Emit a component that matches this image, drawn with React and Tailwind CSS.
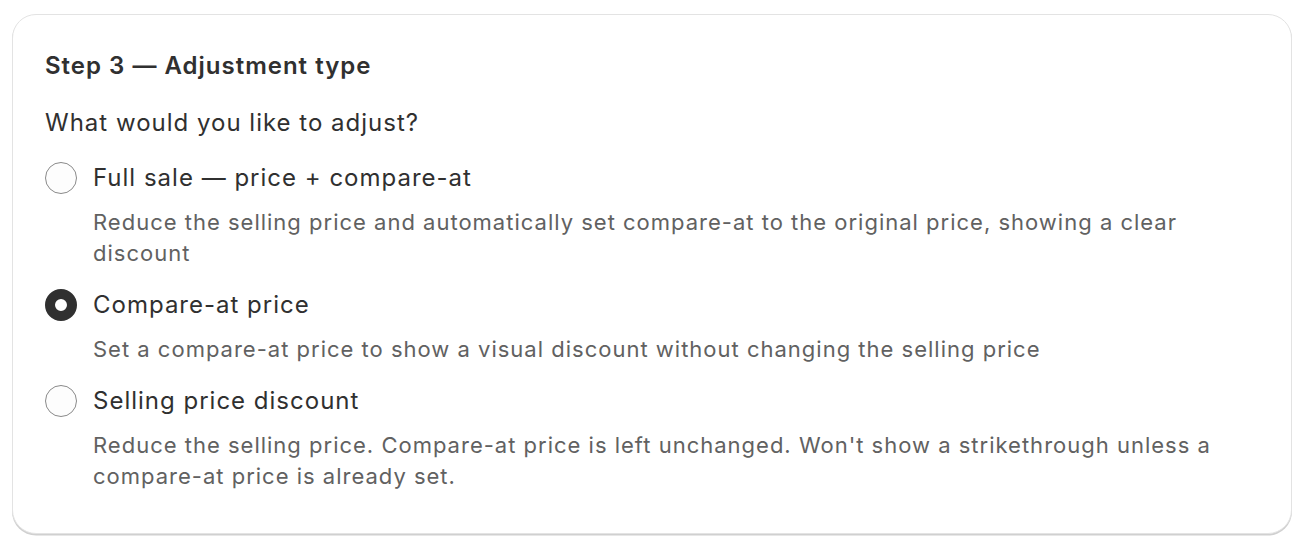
import React from 'react'

const options = [
  {
    label: 'Full sale — price + compare-at',
    help: 'Reduce the selling price and automatically set compare-at to the original price, showing a clear discount',
    checked: false,
  },
  {
    label: 'Compare-at price',
    help: 'Set a compare-at price to show a visual discount without changing the selling price',
    checked: true,
  },
  {
    label: 'Selling price discount',
    help: "Reduce the selling price. Compare-at price is left unchanged. Won't show a strikethrough unless a compare-at price is already set.",
    checked: false,
  },
]

function Radio({ checked }) {
  if (checked) {
    return <span className="w-8 h-8 shrink-0 rounded-full border-[10px] border-[#303030] bg-white" />
  }
  return <span className="w-8 h-8 shrink-0 rounded-full border border-[#8a8a8a] bg-[#fdfdfd]" />
}

function Option({ label, help, checked }) {
  return (
    <div>
      <label className="flex items-center gap-[16px] h-8">
        <Radio checked={checked} />
        <span className="text-[24px] leading-8 tracking-[1px] text-[#303030]">{label}</span>
      </label>
      <p className="mt-[13px] pl-[48px] text-[22px] leading-[31px] tracking-[1px] text-[#616161]">{help}</p>
    </div>
  )
}

export default function App() {
  return (
    <div className="bg-white min-h-[550px] pt-[14px] px-[12px] font-['Inter','Noto_Sans',sans-serif]">
      <div className="h-[520px] rounded-[24px] border border-[#e3e3e3] shadow-[0_1.5px_0_#d0d0d0] bg-white pt-[35px] px-[32px]">
        <h2 className="text-[24px] leading-8 font-semibold tracking-[1px] text-[#303030]">Step 3 — Adjustment type</h2>
        <p className="mt-[25px] text-[24px] leading-8 tracking-[1px] text-[#303030]">What would you like to adjust?</p>
        <div className="mt-[23px] flex flex-col gap-[20px]">
          {options.map((o) => (
            <Option key={o.label} {...o} />
          ))}
        </div>
      </div>
    </div>
  )
}
